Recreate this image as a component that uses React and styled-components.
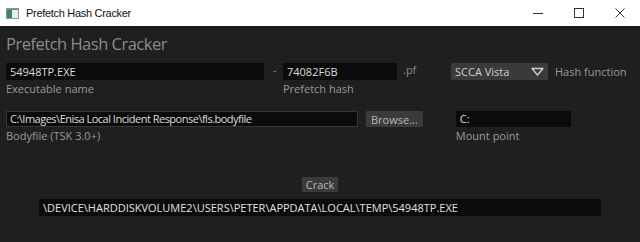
import React from "react";
import styled, { createGlobalStyle } from "styled-components";

const GlobalStyle = createGlobalStyle`
  html, body {
    margin: 0;
    padding: 0;
    background: #1f1f1f;
  }
  * {
    box-sizing: border-box;
  }
`;

const Window = styled.div`
  width: 640px;
  height: 242px;
  display: flex;
  flex-direction: column;
  background: #1f1f1f;
  overflow: hidden;
`;

const TitleBar = styled.div`
  height: 27px;
  flex: none;
  display: flex;
  align-items: center;
  background: #ffffff;
  border-bottom: 1px solid #1a1a1a;
  padding-left: 6px;
`;

const AppIcon = styled.svg`
  width: 13px;
  height: 11px;
  margin-right: 7px;
  flex: none;
`;

const TitleText = styled.span`
  font-family: "Liberation Sans", "Noto Sans", sans-serif;
  font-size: 11px;
  letter-spacing: -0.3px;
  color: #111;
  flex: 1;
`;

const Controls = styled.div`
  display: flex;
  height: 100%;
`;

const ControlBtn = styled.div`
  width: 41px;
  height: 100%;
  display: flex;
  align-items: center;
  justify-content: center;
`;

const Body = styled.div`
  flex: 1;
  padding: 6px 6px 0 6px;
  display: flex;
  flex-direction: column;
  font-family: "Open Sans", "Noto Sans", sans-serif;
`;

const Heading = styled.h1`
  margin: 0;
  font-family: "Open Sans", "Noto Sans", sans-serif;
  font-weight: 400;
  font-size: 16.5px;
  letter-spacing: -0.5px;
  line-height: 22px;
  color: #8b8b8b;
  height: 30px;
`;

const Row = styled.div`
  display: flex;
  align-items: flex-start;
  height: ${({ h }) => h}px;
`;

const Field = styled.div`
  display: flex;
  flex-direction: column;
  width: ${({ w }) => w}px;
  margin-left: ${({ ml }) => ml || 0}px;
  flex: none;
`;

const Input = styled.div`
  height: ${({ h }) => h || 17}px;
  background: #0b0b0b;
  color: #dcdcdc;
  font-size: 11px;
  letter-spacing: ${({ tight }) => (tight ? "-0.5px" : "0")};
  white-space: nowrap;
  overflow: hidden;
  border: ${({ focused }) => (focused ? "1px solid #363636" : "none")};
  line-height: ${({ h, focused }) => (h || 17) - (focused ? 2 : 0)}px;
  padding-left: ${({ focused }) => (focused ? 3 : 4)}px;
`;

const Label = styled.span`
  margin-top: 2px;
  font-size: 11px;
  line-height: 14px;
  color: #9a9a9a;
  white-space: nowrap;
`;

const Sep = styled.span`
  width: ${({ w }) => w}px;
  margin-left: ${({ ml }) => ml || 0}px;
  flex: none;
  font-size: 11px;
  line-height: 14px;
  color: #8a8a8a;
  white-space: nowrap;
`;

const SideLabel = styled.span`
  margin-left: 7px;
  flex: none;
  font-size: 11px;
  line-height: 17px;
  color: #9a9a9a;
  white-space: nowrap;
`;

const Select = styled.div`
  width: 97px;
  height: 17px;
  margin-left: ${({ ml }) => ml}px;
  flex: none;
  display: flex;
  align-items: center;
  justify-content: space-between;
  background: #3a3a3a;
  color: #d0d0d0;
  font-size: 11px;
  padding: 0 4px;
`;

const Button = styled.div`
  height: ${({ h }) => h || 16}px;
  padding: 0 ${({ px }) => px || 5}px;
  margin-left: ${({ ml }) => ml || 0}px;
  flex: none;
  display: flex;
  align-items: center;
  background: #3b3b3b;
  color: #b8b8b8;
  font-size: 11px;
  border-radius: 1px;
`;

const Center = styled.div`
  display: flex;
  flex-direction: column;
  align-items: center;
`;

const Result = styled.div`
  width: 562px;
  height: 17px;
  margin-top: 7px;
  background: #0b0b0b;
  color: #e0e0e0;
  font-size: 11px;
  line-height: 17px;
  padding-left: 4px;
  white-space: nowrap;
`;

export default function App() {
  return (
    <>
      <GlobalStyle />
      <Window>
        <TitleBar>
          <AppIcon viewBox="0 0 13 11">
            <rect x="0.5" y="0.5" width="12" height="10" fill="#e8ecec" stroke="#8a9a9a" />
            <rect x="1" y="2" width="5" height="8" fill="#3f7f74" />
            <rect x="1" y="1" width="11" height="1" fill="#6e8c88" />
          </AppIcon>
          <TitleText>Prefetch Hash Cracker</TitleText>
          <Controls>
            <ControlBtn>
              <svg width="10" height="10" viewBox="0 0 10 10">
                <line x1="0" y1="5.5" x2="10" y2="5.5" stroke="#333" strokeWidth="1" />
              </svg>
            </ControlBtn>
            <ControlBtn>
              <svg width="10" height="10" viewBox="0 0 10 10">
                <rect x="0.5" y="0.5" width="9" height="9" fill="none" stroke="#333" strokeWidth="1" />
              </svg>
            </ControlBtn>
            <ControlBtn>
              <svg width="10" height="10" viewBox="0 0 10 10">
                <path d="M0.5 0.5 L9.5 9.5 M9.5 0.5 L0.5 9.5" stroke="#333" strokeWidth="1" />
              </svg>
            </ControlBtn>
          </Controls>
        </TitleBar>
        <Body>
          <Heading>Prefetch Hash Cracker</Heading>
          <Row h={48}>
            <Field w={258}>
              <Input>54948TP.EXE</Input>
              <Label>Executable name</Label>
            </Field>
            <Sep w={10} ml={9}>-</Sep>
            <Field w={114}>
              <Input>74082F6B</Input>
              <Label>Prefetch hash</Label>
            </Field>
            <Sep w={20} ml={6}>.pf</Sep>
            <Select ml={28}>
              <span>SCCA Vista</span>
              <svg width="13" height="9" viewBox="0 0 13 9">
                <path d="M1 1.5 H12 L6.5 8 Z" fill="none" stroke="#cfcfcf" strokeWidth="1.4" strokeLinejoin="round" />
              </svg>
            </Select>
            <SideLabel>Hash function</SideLabel>
          </Row>
          <Row h={66}>
            <Field w={352}>
              <Input h={16} focused tight>
                C:\Images\Enisa Local Incident Response\fls.bodyfile
              </Input>
              <Label>Bodyfile (TSK 3.0+)</Label>
            </Field>
            <Button ml={8}>Browse...</Button>
            <Field w={115} ml={33}>
              <Input h={16}>C:</Input>
              <Label>Mount point</Label>
            </Field>
          </Row>
          <Center>
            <Button h={15} px={4}>
              Crack
            </Button>
            <Result>
              \DEVICE\HARDDISKVOLUME2\USERS\PETER\APPDATA\LOCAL\TEMP\54948TP.EXE
            </Result>
          </Center>
        </Body>
      </Window>
    </>
  );
}
